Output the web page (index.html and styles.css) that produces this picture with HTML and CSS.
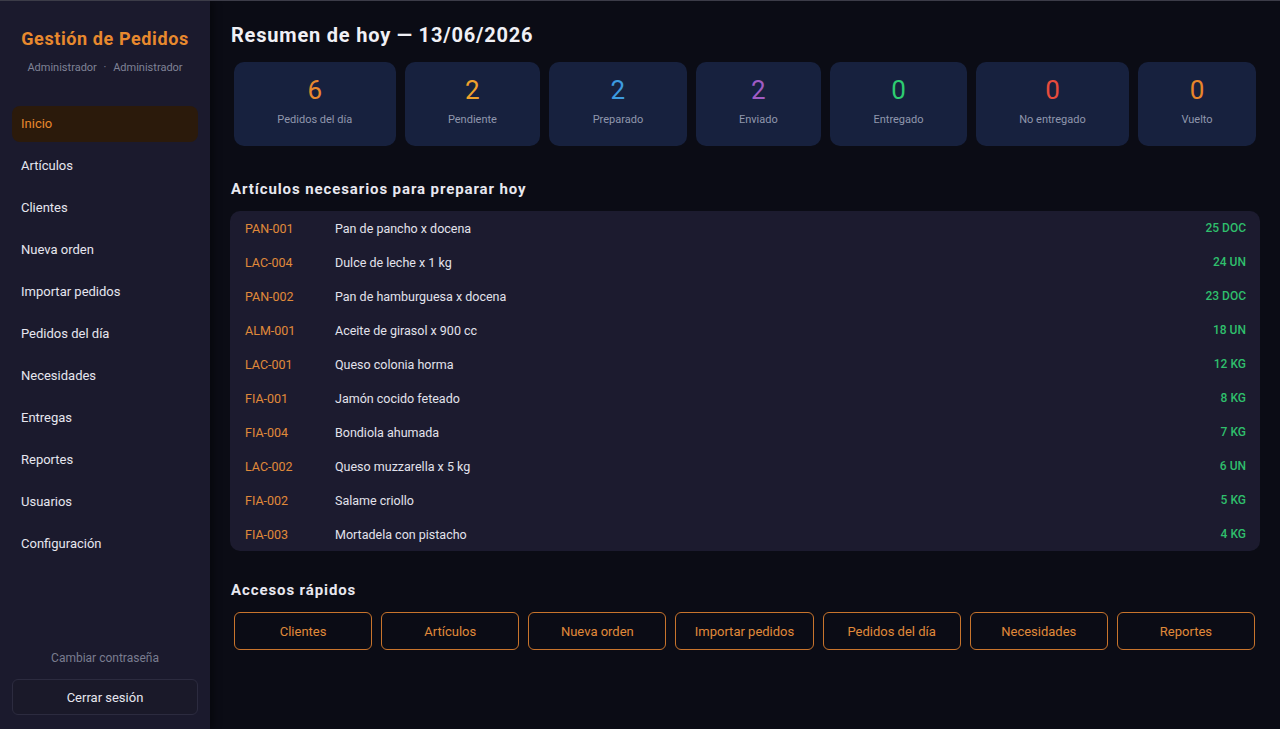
FILE: index.html
```html
<!DOCTYPE html>
<html lang="es">
<head>
    <meta charset="UTF-8">
    <meta name="viewport" content="width=device-width, initial-scale=1.0">
    <title>Gestión de Pedidos</title>
    <link rel="stylesheet" href="styles.css">
</head>
<body>
    <div class="layout">
        <aside class="sidebar">
            <div class="brand">
                <h1>Gestión de Pedidos</h1>
                <p class="user">Administrador <span class="dot">·</span> Administrador</p>
            </div>
            <nav class="menu">
                <a class="active" href="#">Inicio</a>
                <a href="#">Artículos</a>
                <a href="#">Clientes</a>
                <a href="#">Nueva orden</a>
                <a href="#">Importar pedidos</a>
                <a href="#">Pedidos del día</a>
                <a href="#">Necesidades</a>
                <a href="#">Entregas</a>
                <a href="#">Reportes</a>
                <a href="#">Usuarios</a>
                <a href="#">Configuración</a>
            </nav>
            <div class="sidebar-footer">
                <a class="change-pass" href="#">Cambiar contraseña</a>
                <button class="logout">Cerrar sesión</button>
            </div>
        </aside>

        <main class="main">
            <h2 class="page-title">Resumen de hoy — 13/06/2026</h2>

            <div class="stats">
                <div class="stat"><div class="num orange">6</div><div class="label">Pedidos del día</div></div>
                <div class="stat"><div class="num yellow">2</div><div class="label">Pendiente</div></div>
                <div class="stat"><div class="num blue">2</div><div class="label">Preparado</div></div>
                <div class="stat"><div class="num purple">2</div><div class="label">Enviado</div></div>
                <div class="stat"><div class="num green">0</div><div class="label">Entregado</div></div>
                <div class="stat"><div class="num red">0</div><div class="label">No entregado</div></div>
                <div class="stat"><div class="num orange2">0</div><div class="label">Vuelto</div></div>
            </div>

            <h3 class="section-title">Artículos necesarios para preparar hoy</h3>
            <div class="needs">
                <div class="row"><span class="code">PAN-001</span><span class="name">Pan de pancho x docena</span><span class="qty">25 DOC</span></div>
                <div class="row"><span class="code">LAC-004</span><span class="name">Dulce de leche x 1 kg</span><span class="qty">24 UN</span></div>
                <div class="row"><span class="code">PAN-002</span><span class="name">Pan de hamburguesa x docena</span><span class="qty">23 DOC</span></div>
                <div class="row"><span class="code">ALM-001</span><span class="name">Aceite de girasol x 900 cc</span><span class="qty">18 UN</span></div>
                <div class="row"><span class="code">LAC-001</span><span class="name">Queso colonia horma</span><span class="qty">12 KG</span></div>
                <div class="row"><span class="code">FIA-001</span><span class="name">Jamón cocido feteado</span><span class="qty">8 KG</span></div>
                <div class="row"><span class="code">FIA-004</span><span class="name">Bondiola ahumada</span><span class="qty">7 KG</span></div>
                <div class="row"><span class="code">LAC-002</span><span class="name">Queso muzzarella x 5 kg</span><span class="qty">6 UN</span></div>
                <div class="row"><span class="code">FIA-002</span><span class="name">Salame criollo</span><span class="qty">5 KG</span></div>
                <div class="row"><span class="code">FIA-003</span><span class="name">Mortadela con pistacho</span><span class="qty">4 KG</span></div>
            </div>

            <h3 class="section-title quick-title">Accesos rápidos</h3>
            <div class="quick">
                <button>Clientes</button>
                <button>Artículos</button>
                <button>Nueva orden</button>
                <button>Importar pedidos</button>
                <button>Pedidos del día</button>
                <button>Necesidades</button>
                <button>Reportes</button>
            </div>
        </main>
    </div>
</body>
</html>
```

FILE: styles.css
```css
* {
    box-sizing: border-box;
}
body {
    margin: 0;
    padding: 0;
    font-family: Roboto, "Liberation Sans", sans-serif;
    background-color: #0b0c15;
    color: #e6e6ef;
    border-top: 1px solid #3c3c48;
}
.layout {
    display: flex;
    height: 728px;
}
.sidebar {
    width: 210px;
    flex-shrink: 0;
    background-color: #1b1a2d;
    display: flex;
    flex-direction: column;
    padding: 0 12px 14px;
    box-shadow: 3px 0 8px rgba(0, 0, 0, 0.45);
    position: relative;
    z-index: 1;
}
.brand {
    text-align: center;
    padding-top: 27px;
}
.brand h1 {
    margin: 0;
    font-size: 18px;
    font-weight: 700;
    color: #e8892e;
    letter-spacing: 0.6px;
}
.user {
    margin: 12px 0 0;
    font-size: 11px;
    color: #7f8296;
}
.user .dot {
    margin: 0 4px;
}
.menu {
    display: flex;
    flex-direction: column;
    gap: 6px;
    margin-top: 32px;
}
.menu a {
    display: block;
    height: 36px;
    line-height: 36px;
    padding: 0 9px;
    font-size: 13px;
    color: #e6e6ef;
    text-decoration: none;
    border-radius: 8px;
}
.menu a.active {
    background-color: #2b1a0b;
    color: #e8892e;
}
.sidebar-footer {
    margin-top: auto;
    display: flex;
    flex-direction: column;
    align-items: center;
}
.change-pass {
    font-size: 12px;
    color: #7a7d90;
    text-decoration: none;
    margin-bottom: 14px;
}
.logout {
    width: 100%;
    height: 36px;
    background-color: #1a1929;
    border: 1px solid #2c2b3f;
    border-radius: 6px;
    color: #e6e6ef;
    font-family: inherit;
    font-size: 13px;
}
.main {
    flex: 1;
    padding: 21px 20px 0;
}
.page-title {
    margin: 0 0 0 1px;
    font-size: 20px;
    font-weight: 700;
    color: #f0f0f5;
    line-height: 26px;
    letter-spacing: 0.8px;
}
.stats {
    display: flex;
    gap: 9px;
    padding: 0 4px;
    margin-top: 14px;
}
.stat {
    flex: 1 1 auto;
    height: 84px;
    background-color: #17213e;
    border-radius: 10px;
    text-align: center;
    padding: 13px 16px 0;
}
.num {
    font-size: 26px;
    line-height: 30px;
}
.label {
    margin-top: 8px;
    font-size: 11px;
    color: #9097ad;
}
.orange { color: #e8892e; }
.yellow { color: #f0a12c; }
.blue { color: #3d9be0; }
.purple { color: #a05cc4; }
.green { color: #2ecc71; }
.red { color: #e74c3c; }
.orange2 { color: #e8862a; }
.section-title {
    margin: 33px 0 0 1px;
    font-size: 15px;
    font-weight: 700;
    color: #e8e8f0;
    line-height: 20px;
    letter-spacing: 0.9px;
}
.needs {
    margin-top: 12px;
    background-color: #1c1b2f;
    border-radius: 10px;
}
.row {
    display: flex;
    align-items: center;
    height: 34px;
    padding: 0 14px 0 15px;
    font-size: 12.5px;
}
.code {
    width: 90px;
    color: #e08a3a;
}
.name {
    flex: 1;
    color: #e2e2ec;
}
.qty {
    color: #2fbf6c;
    font-weight: 500;
    font-size: 12px;
}
.quick-title {
    margin-top: 29px;
}
.quick {
    display: grid;
    grid-template-columns: repeat(7, 1fr);
    gap: 9px;
    padding: 0 5px 0 4px;
    margin-top: 12px;
}
.quick button {
    height: 38px;
    background-color: transparent;
    border: 1.5px solid #c8742c;
    border-radius: 6px;
    color: #e08a3a;
    font-family: inherit;
    font-size: 13px;
    cursor: pointer;
}
```
